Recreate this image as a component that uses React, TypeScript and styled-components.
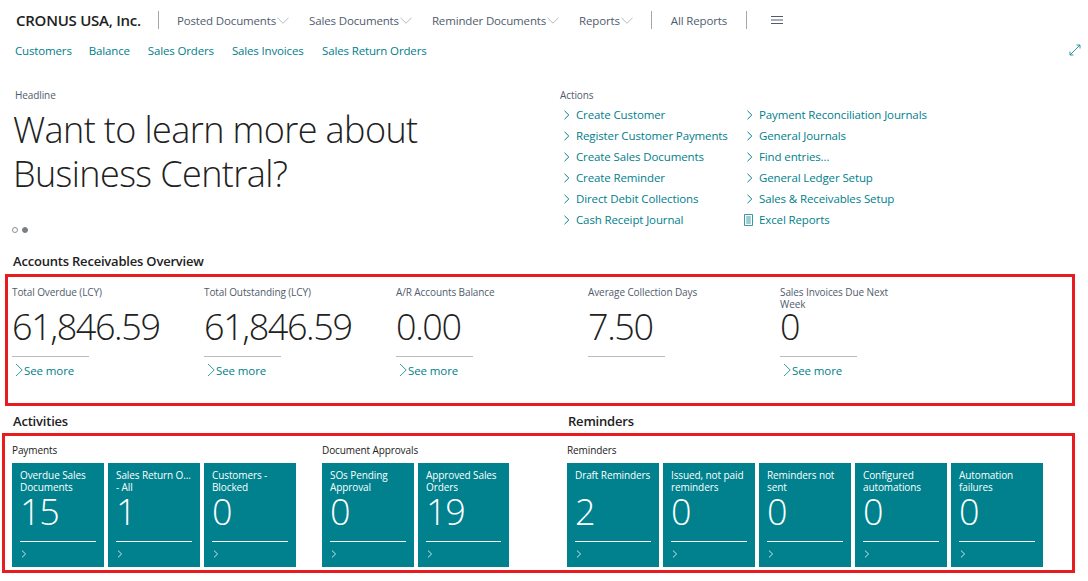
import React from 'react';
import styled, { createGlobalStyle } from 'styled-components';

const GlobalStyle = createGlobalStyle`
  html, body {
    margin: 0;
    padding: 0;
    background: #fff;
  }
  * {
    box-sizing: border-box;
  }
`;

const FONT = `"Open Sans", "Noto Sans", "Liberation Sans", sans-serif`;
const TEAL = '#00818d';
const LINK = '#00808c';
const RED = '#e81c1f';

const Page = styled.div`
  width: 1088px;
  height: 581px;
  overflow: hidden;
  font-family: ${FONT};
  color: #212121;
  background: #fff;
`;

const TopBar = styled.div`
  display: flex;
  align-items: center;
  height: 40px;
  padding: 0 0 0 16px;
`;

const Company = styled.div`
  font-size: 15px;
  font-weight: 600;
  letter-spacing: -0.25px;
  color: #212121;
  width: 142px;
  white-space: nowrap;
`;

const Divider = styled.div`
  width: 1px;
  height: 18px;
  background: #a6a6a6;
`;

const MenuItem = styled.div<{ $left: number }>`
  display: flex;
  align-items: center;
  margin-left: ${(p) => p.$left}px;
  font-size: 11.5px;
  letter-spacing: -0.15px;
  color: #505c6d;
  white-space: nowrap;
`;

const SubBar = styled.div`
  display: flex;
  align-items: center;
  height: 18px;
  margin-top: 1px;
  padding: 0 7px 0 15px;
`;

const SubLink = styled.div<{ $left?: number }>`
  margin-left: ${(p) => p.$left ?? 0}px;
  font-size: 11.5px;
  letter-spacing: -0.15px;
  color: ${LINK};
  white-space: nowrap;
`;

const ExpandIcon = styled.svg`
  margin: -1px 0 0 auto;
  width: 12px;
  height: 12px;
`;

const Hero = styled.div`
  display: flex;
  height: 164px;
  margin-top: 29px;
`;

const Headline = styled.div`
  width: 560px;
  padding-left: 15px;
`;

const SmallLabel = styled.div`
  font-size: 10px;
  line-height: 14px;
  letter-spacing: -0.1px;
  color: #505c6d;
`;

const BigText = styled.div`
  margin: 6px 0 0 -2px;
  font-size: 36px;
  font-weight: 300;
  line-height: 44px;
  letter-spacing: -0.6px;
  white-space: nowrap;
  color: #212121;
`;

const Dots = styled.div`
  display: flex;
  gap: 4px;
  margin: 31px 0 0 -3px;
`;

const Dot = styled.span<{ $filled?: boolean }>`
  width: 6px;
  height: 6px;
  border-radius: 50%;
  border: 1px solid ${(p) => (p.$filled ? '#7a7f87' : '#8a8f96')};
  background: ${(p) => (p.$filled ? '#7a7f87' : '#fff')};
`;

const Actions = styled.div`
  width: 520px;
`;

const ActionGrid = styled.div`
  display: grid;
  grid-template-columns: 183px 1fr;
  grid-auto-flow: column;
  grid-template-rows: repeat(6, 21px);
  margin: 2px 0 0 3px;
`;

const ActionRow = styled.div`
  display: flex;
  align-items: center;
  gap: 6px;
  font-size: 11.5px;
  letter-spacing: -0.12px;
  color: ${LINK};
  white-space: nowrap;
`;

const ActionIcon = styled.svg`
  width: 7px;
  height: 10px;
  flex: none;
`;

const ExcelIcon = styled.svg`
  width: 9px;
  height: 12px;
  margin-left: -2px;
  flex: none;
`;

const SectionTitle = styled.div`
  font-size: 13px;
  font-weight: 600;
  line-height: 18px;
  letter-spacing: -0.2px;
  color: #212121;
`;

const OverviewTitle = styled(SectionTitle)`
  margin-left: 13px;
`;

const OverviewBox = styled.div`
  display: flex;
  width: 1070px;
  height: 132px;
  margin: 4px 0 0 5px;
  border: 3px solid ${RED};
  padding: 9px 0 0 4px;
`;

const Kpi = styled.div`
  width: 192px;
`;

const KpiLabel = styled.div`
  width: 125px;
  height: 24px;
  font-size: 10px;
  line-height: 12px;
  letter-spacing: -0.1px;
  color: #505c6d;
`;

const KpiValue = styled.div`
  height: 34px;
  font-size: 36px;
  font-weight: 300;
  line-height: 34px;
  letter-spacing: -1.4px;
  color: #212121;
`;

const KpiRule = styled.div`
  width: 77px;
  height: 1px;
  background: #b9bcbf;
  margin-top: 12px;
`;

const SeeMore = styled.div`
  display: flex;
  align-items: center;
  height: 26px;
  padding-left: 3px;
  font-size: 11.5px;
  letter-spacing: -0.1px;
  color: ${LINK};
`;

const SeeMoreIcon = styled.svg`
  width: 9px;
  height: 14px;
  flex: none;
`;

const HeadRow = styled.div`
  display: flex;
  margin-top: 6px;
  padding-left: 13px;
`;

const HeadCell = styled.div<{ $width: number }>`
  width: ${(p) => p.$width}px;
`;

const TilesBox = styled.div`
  display: flex;
  width: 1073px;
  height: 140px;
  margin: 3px 0 0 2px;
  border: 3px solid ${RED};
  padding: 7px 0 0 7px;
`;

const Group = styled.div<{ $width: number }>`
  width: ${(p) => p.$width}px;
`;

const GroupTitle = styled.div`
  font-size: 10px;
  line-height: 14px;
  letter-spacing: -0.1px;
  color: #212121;
`;

const TileRow = styled.div`
  display: flex;
  gap: 4px;
  margin-top: 6px;
`;

const Tile = styled.div<{ $width?: number }>`
  display: flex;
  flex-direction: column;
  width: ${(p) => p.$width ?? 92}px;
  height: 104px;
  padding: 6px 8px 0;
  background: ${TEAL};
  color: #fff;
`;

const TileLabel = styled.div`
  height: 24px;
  font-size: 10px;
  line-height: 12px;
  letter-spacing: -0.1px;
  white-space: pre-line;
`;

const TileValue = styled.div`
  height: 34px;
  margin-top: 2px;
  font-size: 36px;
  font-weight: 300;
  line-height: 34px;
  letter-spacing: -1.4px;
`;

const TileRule = styled.div`
  height: 1px;
  margin-top: 12px;
  background: #fff;
`;

const TileIcon = styled.svg`
  width: 6px;
  height: 8px;
  margin: 8px 0 0 1px;
`;

const Chevron = () => (
  <svg width="12" height="7" viewBox="0 0 12 7" style={{ marginLeft: 1 }} fill="none">
    <path d="M.5.8 6 6.2 11.5.8" stroke="#a3a8af" strokeWidth="0.8" />
  </svg>
);

const ActionArrow = () => (
  <ActionIcon viewBox="0 0 7 10" fill="none">
    <path d="M1.5.8 5.8 5 1.5 9.2" stroke={LINK} strokeWidth="1" />
  </ActionIcon>
);

const actionItems = [
  'Create Customer',
  'Register Customer Payments',
  'Create Sales Documents',
  'Create Reminder',
  'Direct Debit Collections',
  'Cash Receipt Journal',
  'Payment Reconciliation Journals',
  'General Journals',
  'Find entries...',
  'General Ledger Setup',
  'Sales & Receivables Setup',
];

const kpis = [
  { label: 'Total Overdue (LCY)', value: '61,846.59' },
  { label: 'Total Outstanding (LCY)', value: '61,846.59' },
  { label: 'A/R Accounts Balance', value: '0.00' },
  { label: 'Average Collection Days', value: '7.50', noLink: true },
  { label: 'Sales Invoices Due Next Week', value: '0' },
];

const groups = [
  {
    title: 'Payments',
    width: 310,
    tiles: [
      { label: 'Overdue Sales\nDocuments', value: '15' },
      { label: 'Sales Return O...\n- All', value: '1' },
      { label: 'Customers -\nBlocked', value: '0' },
    ],
  },
  {
    title: 'Document Approvals',
    width: 245,
    tiles: [
      { label: 'SOs Pending\nApproval', value: '0' },
      { label: 'Approved Sales\nOrders', value: '19', width: 91 },
    ],
  },
  {
    title: 'Reminders',
    width: 480,
    tiles: [
      { label: 'Draft Reminders', value: '2' },
      { label: 'Issued, not paid\nreminders', value: '0' },
      { label: 'Reminders not\nsent', value: '0' },
      { label: 'Configured\nautomations', value: '0' },
      { label: 'Automation\nfailures', value: '0' },
    ],
  },
];

export default function App() {
  return (
    <Page>
      <GlobalStyle />
      <TopBar>
        <Company>CRONUS USA, Inc.</Company>
        <Divider />
        <MenuItem $left={18}>Posted Documents<Chevron /></MenuItem>
        <MenuItem $left={20}>Sales Documents<Chevron /></MenuItem>
        <MenuItem $left={20}>Reminder Documents<Chevron /></MenuItem>
        <MenuItem $left={20}>Reports<Chevron /></MenuItem>
        <MenuItem $left={18}><Divider /></MenuItem>
        <MenuItem $left={19}>All Reports</MenuItem>
        <MenuItem $left={19}><Divider /></MenuItem>
        <MenuItem $left={24}>
          <svg width="12" height="8" viewBox="0 0 12 8" fill="none">
            <path d="M0 .5h12M0 4h12M0 7.5h12" stroke="#505c6d" strokeWidth="1" />
          </svg>
        </MenuItem>
      </TopBar>
      <SubBar>
        <SubLink>Customers</SubLink>
        <SubLink $left={17}>Balance</SubLink>
        <SubLink $left={18}>Sales Orders</SubLink>
        <SubLink $left={18}>Sales Invoices</SubLink>
        <SubLink $left={18.5}>Sales Return Orders</SubLink>
        <ExpandIcon viewBox="0 0 12 12" fill="none">
          <path d="M1 11 11 1M7.5 1H11v3.5M1 7.5V11h3.5" stroke={LINK} strokeWidth="0.8" />
        </ExpandIcon>
      </SubBar>
      <Hero>
        <Headline>
          <SmallLabel>Headline</SmallLabel>
          <BigText>
            Want to learn more about
            <br />
            Business Central?
          </BigText>
          <Dots>
            <Dot />
            <Dot $filled />
          </Dots>
        </Headline>
        <Actions>
          <SmallLabel>Actions</SmallLabel>
          <ActionGrid>
            {actionItems.map((item) => (
              <ActionRow key={item}>
                <ActionArrow />
                {item}
              </ActionRow>
            ))}
            <ActionRow>
              <ExcelIcon viewBox="0 0 9 12" fill="none">
                <path d="M.5.5h8v11h-8zM2.2 3h4.6M2.2 5h4.6M2.2 7h4.6M2.2 9h4.6" stroke={LINK} strokeWidth="0.8" />
              </ExcelIcon>
              Excel Reports
            </ActionRow>
          </ActionGrid>
        </Actions>
      </Hero>
      <OverviewTitle>Accounts Receivables Overview</OverviewTitle>
      <OverviewBox>
        {kpis.map((kpi) => (
          <Kpi key={kpi.label}>
            <KpiLabel>{kpi.label}</KpiLabel>
            <KpiValue>{kpi.value}</KpiValue>
            <KpiRule />
            {!kpi.noLink && (
              <SeeMore>
                <SeeMoreIcon viewBox="0 0 9 14" fill="none">
                  <path d="M1 1l6.2 6L1 13" stroke={LINK} strokeWidth="0.8" />
                </SeeMoreIcon>
                See more
              </SeeMore>
            )}
          </Kpi>
        ))}
      </OverviewBox>
      <HeadRow>
        <HeadCell $width={555}>
          <SectionTitle>Activities</SectionTitle>
        </HeadCell>
        <HeadCell $width={300}>
          <SectionTitle>Reminders</SectionTitle>
        </HeadCell>
      </HeadRow>
      <TilesBox>
        {groups.map((group) => (
          <Group key={group.title} $width={group.width}>
            <GroupTitle>{group.title}</GroupTitle>
            <TileRow>
              {group.tiles.map((tile) => (
                <Tile key={tile.label} $width={'width' in tile ? tile.width : undefined}>
                  <TileLabel>{tile.label}</TileLabel>
                  <TileValue>{tile.value}</TileValue>
                  <TileRule />
                  <TileIcon viewBox="0 0 6 8" fill="none">
                    <path d="M1 .6 4.6 4 1 7.4" stroke="#fff" strokeWidth="0.8" />
                  </TileIcon>
                </Tile>
              ))}
            </TileRow>
          </Group>
        ))}
      </TilesBox>
    </Page>
  );
}
